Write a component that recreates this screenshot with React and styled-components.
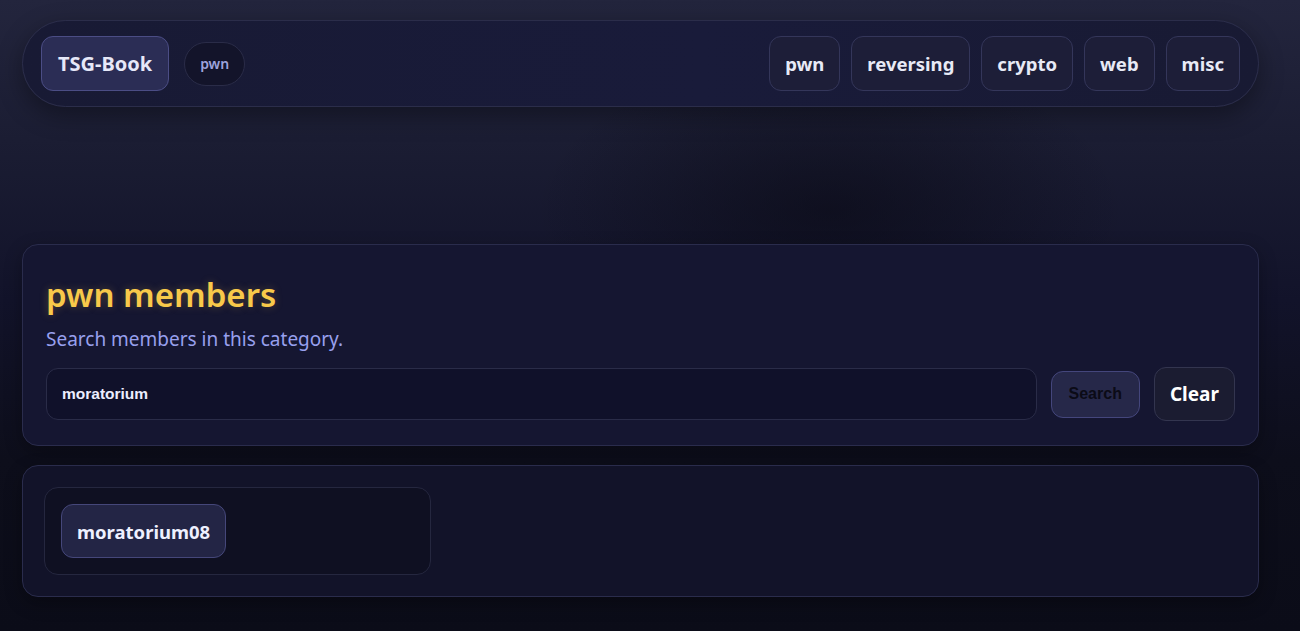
import React from "react";
import styled, { createGlobalStyle } from "styled-components";

const GlobalStyle = createGlobalStyle`
  html, body {
    margin: 0;
    padding: 0;
    min-height: 100%;
  }
  body {
    font-family: "Noto Sans", "Open Sans", sans-serif;
    color: #e8eaf6;
    background-color: #0d0e1a;
    background-image:
      radial-gradient(ellipse 420px 220px at 830px 210px, rgba(8, 8, 18, 0.55), transparent 70%),
      linear-gradient(180deg, #23253d 0px, #1b1d33 140px, #12132a 300px, #0d0e1b 460px, #0b0c18 631px);
    min-height: 631px;
  }
`;

const categories = ["pwn", "reversing", "crypto", "web", "misc"];

function App() {
  return (
    <>
      <GlobalStyle />
      <Page>
        <Header>
          <Brand>
            <HomeButton>TSG-Book</HomeButton>
            <CurrentTag>pwn</CurrentTag>
          </Brand>
          <Nav>
            {categories.map((c) => (
              <NavButton key={c}>{c}</NavButton>
            ))}
          </Nav>
        </Header>

        <Main>
          <Card>
            <Heading>pwn members</Heading>
            <Subtitle>Search members in this category.</Subtitle>
            <SearchRow>
              <SearchInput defaultValue="moratorium" />
              <SearchButton>Search</SearchButton>
              <ClearButton>Clear</ClearButton>
            </SearchRow>
          </Card>

          <ResultCard>
            <Grid>
              <MemberBox>
                <MemberButton>moratorium08</MemberButton>
              </MemberBox>
            </Grid>
          </ResultCard>
        </Main>
      </Page>
    </>
  );
}

export default App;

const Page = styled.div`
  padding: 20px 41px 34px 22px;
  box-sizing: border-box;
`;

const Header = styled.header`
  display: flex;
  align-items: center;
  justify-content: space-between;
  padding: 15px 18px;
  border-radius: 999px;
  background: linear-gradient(90deg, #181a34 0%, #191b3a 55%, #181a33 100%);
  border: 1px solid #2b2d4a;
  box-shadow: 0 8px 24px rgba(0, 0, 0, 0.35);
`;

const Brand = styled.div`
  display: flex;
  align-items: center;
  gap: 15px;
`;

const HomeButton = styled.button`
  height: 55px;
  padding: 0 16px;
  border-radius: 12px;
  background: #2b2d55;
  border: 1px solid #4b4d85;
  color: #e6e8f8;
  font-family: "Noto Sans", sans-serif;
  font-weight: 700;
  font-size: 20px;
`;

const CurrentTag = styled.span`
  display: inline-flex;
  align-items: center;
  justify-content: center;
  height: 42px;
  padding: 0 15px;
  border-radius: 999px;
  background: #13142a;
  border: 1px solid #2a2c48;
  color: #9ea4dd;
  font-size: 14px;
  font-weight: 600;
`;

const Nav = styled.nav`
  display: flex;
  align-items: center;
  gap: 11px;
`;

const NavButton = styled.button`
  height: 55px;
  padding: 0 15px;
  border-radius: 12px;
  background: #1d1e38;
  border: 1px solid #34365a;
  color: #e8eaf6;
  font-family: "Noto Sans", sans-serif;
  font-weight: 700;
  font-size: 18.5px;
`;

const Main = styled.main`
  margin-top: 137px;
  display: flex;
  flex-direction: column;
  gap: 19px;
`;

const Card = styled.section`
  padding: 24px 23px 24px 23px;
  border-radius: 16px;
  background: #151631;
  border: 1px solid #2a2c4c;
  box-shadow: 0 6px 18px rgba(0, 0, 0, 0.3);
`;

const Heading = styled.h1`
  margin: 0;
  font-size: 33px;
  font-weight: 600;
  line-height: 52px;
  color: #f8c94a;
  text-shadow: 0 0 8px rgba(248, 201, 74, 0.25);
`;

const Subtitle = styled.p`
  margin: 5px 0 15px 0;
  font-size: 19px;
  line-height: 26px;
  color: #98a0ee;
`;

const SearchRow = styled.div`
  display: flex;
  align-items: center;
  gap: 14px;
`;

const SearchInput = styled.input`
  flex: 1;
  height: 52px;
  box-sizing: border-box;
  padding: 0 15px;
  border-radius: 12px;
  background: #10112a;
  border: 1px solid #2a2c48;
  color: #eceeff;
  font-family: "Liberation Sans", Arial, sans-serif;
  font-weight: 700;
  font-size: 15.5px;
  outline: none;
`;

const SearchButton = styled.button`
  height: 47px;
  padding: 0 17px;
  border-radius: 12px;
  background: #262849;
  border: 1px solid #44467c;
  color: #0b0b16;
  font-family: "Liberation Sans", Arial, sans-serif;
  font-weight: 700;
  font-size: 16px;
`;

const ClearButton = styled.button`
  height: 54px;
  padding: 0 15px;
  border-radius: 12px;
  background: #1b1c31;
  border: 1px solid #33354f;
  color: #ffffff;
  font-family: "Noto Sans", sans-serif;
  font-weight: 700;
  font-size: 19px;
`;

const ResultCard = styled.section`
  padding: 21px;
  border-radius: 16px;
  background: #121329;
  border: 1px solid #2a2c4c;
  box-shadow: 0 6px 18px rgba(0, 0, 0, 0.3);
`;

const Grid = styled.div`
  display: grid;
  grid-template-columns: repeat(3, 1fr);
  gap: 16px;
`;

const MemberBox = styled.div`
  padding: 16px;
  border-radius: 14px;
  background: #0f1022;
  border: 1px solid #25273f;
  display: flex;
`;

const MemberButton = styled.button`
  height: 54px;
  padding: 0 15px;
  border-radius: 12px;
  background: #232545;
  border: 1px solid #45477a;
  color: #eef0ff;
  font-family: "Noto Sans", sans-serif;
  font-weight: 700;
  font-size: 18.5px;
`;
